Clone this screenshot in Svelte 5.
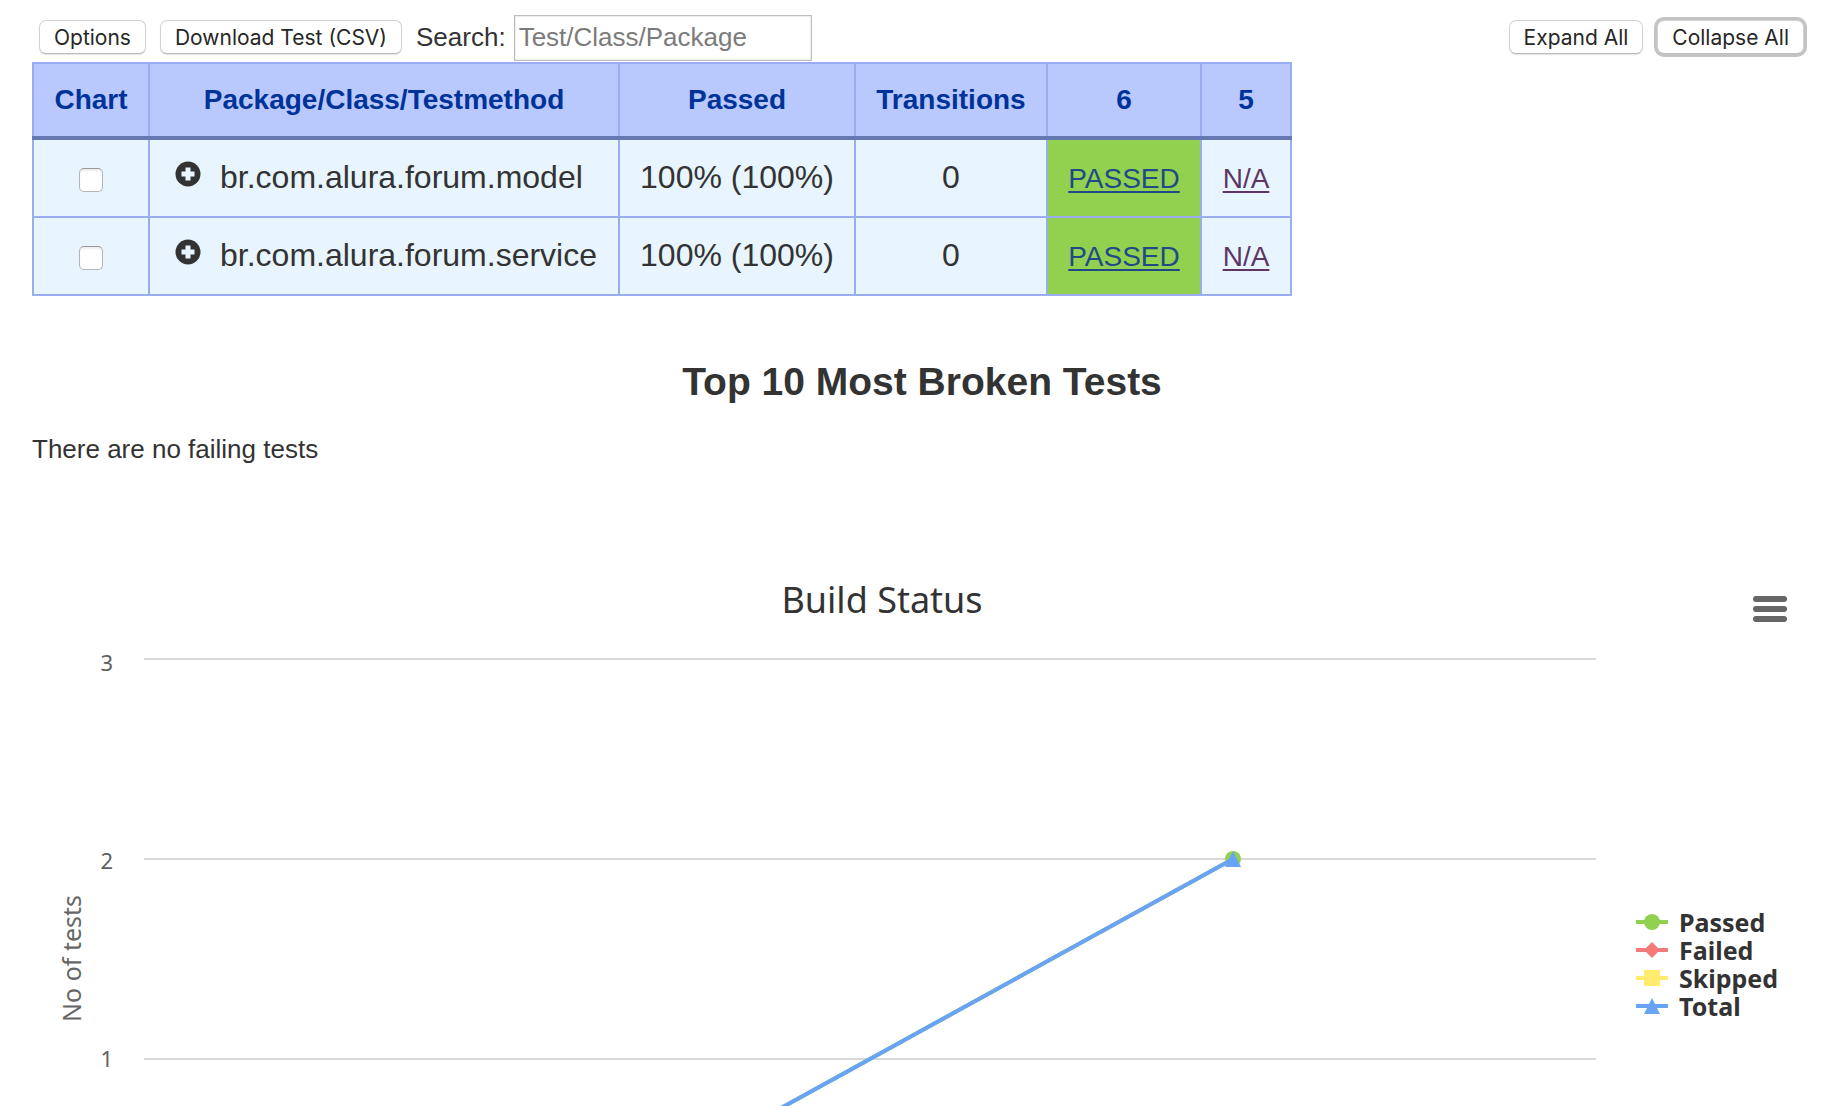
<script>
  const builds = ['6', '5'];
  const rows = [
    { name: 'br.com.alura.forum.model', passed: '100% (100%)', transitions: 0 },
    { name: 'br.com.alura.forum.service', passed: '100% (100%)', transitions: 0 }
  ];
  const ticks = [3, 2, 1];
  const legend = [
    { name: 'Passed', color: '#92d050', shape: 'circle' },
    { name: 'Failed', color: '#f47a7a', shape: 'diamond' },
    { name: 'Skipped', color: '#ffeb6e', shape: 'square' },
    { name: 'Total', color: '#69a3f5', shape: 'triangle' }
  ];

  // Vertical scale of the plot: top gridline offset and distance between ticks.
  const top = 19;
  const step = 200;
  const y = (value) => top + (3 - value) * step;

  let plotWidth = $state(1452);
  let x1 = $derived(plotWidth / 4);
  let x2 = $derived((plotWidth * 3) / 4);
</script>

<main>
  <div class="toolbar">
    <button type="button">Options</button>
    <button type="button">Download Test (CSV)</button>
    <label for="search">Search:</label>
    <input id="search" type="text" placeholder="Test/Class/Package" />
    <span class="spacer"></span>
    <button type="button">Expand All</button>
    <button type="button" class="focused">Collapse All</button>
  </div>

  <table>
    <colgroup>
      <col class="c-chart" /><col class="c-name" /><col class="c-passed" />
      <col class="c-trans" /><col class="c-new" /><col class="c-old" />
    </colgroup>
    <thead>
      <tr>
        <th>Chart</th>
        <th>Package/Class/Testmethod</th>
        <th>Passed</th>
        <th>Transitions</th>
        {#each builds as build}<th>{build}</th>{/each}
      </tr>
    </thead>
    <tbody>
      {#each rows as row}
        <tr>
          <td class="check"><input type="checkbox" aria-label={row.name} /></td>
          <td>
            <div class="name">
              <button type="button" class="expand" aria-label="Expand {row.name}">
                <svg viewBox="0 0 26 26" width="26" height="26">
                  <circle cx="13" cy="13" r="12.5" fill="#333" />
                  <path d="M10.5 6.5h5v4h4v5h-4v4h-5v-4h-4v-5h4z" fill="#e8f5ff" />
                </svg>
              </button>
              <span>{row.name}</span>
            </div>
          </td>
          <td>{row.passed}</td>
          <td>{row.transitions}</td>
          <td class="ok"><a href="#6">PASSED</a></td>
          <td class="na"><a href="#5">N/A</a></td>
        </tr>
      {/each}
    </tbody>
  </table>

  <h1>Top 10 Most Broken Tests</h1>
  <p>There are no failing tests</p>

  <section class="chart">
    <header>
      <h2>Build Status</h2>
      <button type="button" class="menu" aria-label="Chart menu">
        <svg viewBox="0 0 34 26" width="34" height="26" fill="#666">
          <rect width="34" height="6" rx="3" />
          <rect y="10" width="34" height="6" rx="3" />
          <rect y="20" width="34" height="6" rx="3" />
        </svg>
      </button>
    </header>
    <div class="body">
      <div class="axis-title"><span>No of tests</span></div>
      <ul class="ticks">
        {#each ticks as tick}<li>{tick}</li>{/each}
      </ul>
      <div class="plot" bind:clientWidth={plotWidth}>
        <svg width="100%" height="100%">
          {#each ticks as tick}
            <line x1="0" x2="100%" y1={y(tick)} y2={y(tick)} stroke="#d8d8d8" stroke-width="2" />
          {/each}
          <line x1={x1} y1={y(0)} x2={x2} y2={y(2)} stroke="#92d050" stroke-width="4" />
          <circle cx={x2} cy={y(2)} r="8" fill="#92d050" />
          <line x1={x1} y1={y(0)} x2={x2} y2={y(2)} stroke="#69a3f5" stroke-width="4" />
          <path d="M{x2} {y(2) - 8}l8 16h-16z" fill="#69a3f5" />
        </svg>
      </div>
      <ul class="legend">
        {#each legend as item}
          <li>
            <svg viewBox="0 0 32 28" width="32" height="28" fill={item.color}>
              <rect y="12" width="32" height="4" />
              {#if item.shape === 'circle'}
                <circle cx="16" cy="14" r="8" />
              {:else if item.shape === 'diamond'}
                <path d="M16 6l8 8-8 8-8-8z" />
              {:else if item.shape === 'square'}
                <rect x="8" y="6" width="16" height="16" />
              {:else}
                <path d="M16 6l8 16H8z" />
              {/if}
            </svg>
            <span>{item.name}</span>
          </li>
        {/each}
      </ul>
    </div>
  </section>
</main>

<style>
  :global(body) {
    background: #fff;
    color: #333;
    font-family: 'Liberation Sans', Arial, sans-serif;
    font-size: 26px;
  }
  main {
    box-sizing: border-box;
    min-height: 100vh;
    display: flex;
    flex-direction: column;
    padding: 13px 10px 0 32px;
  }
  button {
    margin: 0;
    cursor: pointer;
  }
  svg {
    display: block;
    flex-shrink: 0;
  }
  .toolbar {
    display: flex;
    align-items: center;
    height: 48px;
    gap: 14px;
    padding: 0 8px 1px 7px;
  }
  .toolbar button {
    box-sizing: border-box;
    height: 34px;
    padding: 2px 14px 0;
    border: 1px solid #d2d2d2;
    border-bottom-color: #bdbdbd;
    border-radius: 7px;
    background: #fff;
    box-shadow: 0 1px 1px rgba(0, 0, 0, 0.12);
    color: #272727;
    font: 21px/28px Inter, sans-serif;
    white-space: nowrap;
  }
  .toolbar .focused {
    box-shadow: 0 0 0 3px #c3c3c3;
  }
  .toolbar input {
    box-sizing: border-box;
    align-self: flex-end;
    width: 298px;
    height: 46px;
    margin-left: -6px;
    padding: 0 4px 1px;
    border: 1px solid #bcbcbc;
    box-shadow: inset 0 0 1px 1px #eee;
    border-radius: 0;
    font: inherit;
  }
  .toolbar input::placeholder {
    color: #7b7b7b;
    opacity: 1;
  }
  .spacer {
    flex: 1;
  }
  table {
    align-self: flex-start;
    border-collapse: collapse;
    text-align: center;
    font-size: 32px;
    line-height: 36px;
  }
  .c-chart {
    width: 116px;
  }
  .c-name {
    width: 470px;
  }
  .c-passed {
    width: 236px;
  }
  .c-trans {
    width: 192px;
  }
  .c-new {
    width: 154px;
  }
  .c-old {
    width: 90px;
  }
  th,
  td {
    border: 2px solid #99adf0;
    white-space: nowrap;
  }
  th {
    height: 72px;
    padding: 0 20px;
    border-bottom: 4px solid #6678b1;
    background: #b9c9fe;
    color: #039;
    font-size: 28px;
  }
  td {
    padding: 19px 20px 21px;
    background: #e8f5ff;
    vertical-align: baseline;
  }
  td a {
    font-size: 28px;
    line-height: 28px;
    text-decoration-thickness: 2px;
    text-underline-offset: 3px;
  }
  .check {
    padding-top: 0;
    padding-bottom: 0;
    vertical-align: middle;
  }
  .check input {
    appearance: none;
    display: block;
    box-sizing: border-box;
    width: 24px;
    height: 24px;
    margin: 4px auto 0;
    border: 1px solid #b4b4b4;
    border-top-color: #999;
    border-radius: 5px;
    background: #fff;
    box-shadow: inset 0 2px 2px #eee;
  }
  .name {
    display: flex;
    align-items: baseline;
    gap: 19px;
  }
  .expand {
    align-self: flex-start;
    margin: 2px 0 0 5px;
    padding: 0;
    border: 0;
    background: none;
  }
  .ok {
    background: #92d050;
  }
  .ok a {
    color: #204a87;
  }
  .na a {
    color: #5c3566;
  }
  h1 {
    margin: 63px 0 0;
    font-size: 39px;
    line-height: 46px;
    text-align: center;
  }
  p {
    margin: 29px 0 0;
    line-height: 30px;
  }
  .chart {
    flex: 1;
    display: flex;
    flex-direction: column;
    margin-top: 112px;
    font-family: 'Noto Sans', sans-serif;
    font-size: 25px;
  }
  header {
    display: grid;
    grid-template-columns: 1fr 80px;
    height: 64px;
  }
  h2 {
    margin: 0;
    font-size: 36px;
    font-weight: 400;
    line-height: 48px;
    text-align: center;
  }
  .menu {
    align-self: start;
    margin: 12px 17px 0 13px;
    padding: 8px;
    border: 0;
    background: none;
  }
  .body {
    flex: 1;
    display: grid;
    grid-template-columns: 56px 25px 1fr 216px;
    min-height: 466px;
  }
  ul {
    margin: 0;
    padding: 0;
    list-style: none;
  }
  .axis-title {
    padding: 255px 0 0 23px;
    color: #666;
    line-height: 32px;
  }
  .axis-title span {
    display: block;
    writing-mode: vertical-rl;
    transform: rotate(180deg);
  }
  .ticks {
    height: 466px;
    overflow: hidden;
    color: #606060;
    font-size: 22px;
    line-height: 44px;
    text-align: right;
  }
  .ticks li {
    height: 198px;
  }
  .plot {
    margin-left: 31px;
    min-width: 0;
  }
  .legend {
    padding: 268px 0 0 40px;
    font-weight: 700;
    line-height: 28px;
  }
  .legend li {
    display: flex;
    gap: 11px;
  }
</style>
